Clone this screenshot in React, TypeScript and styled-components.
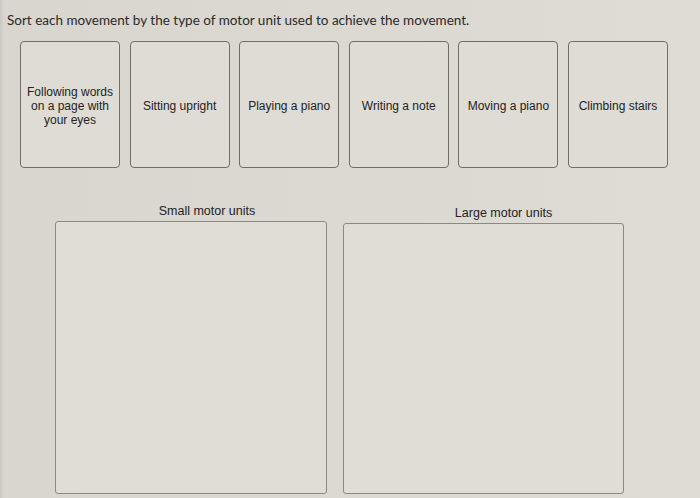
import React from 'react';
import styled, { createGlobalStyle } from 'styled-components';

const GlobalStyle = createGlobalStyle`
  html, body {
    margin: 0;
    padding: 0;
    background: #dad8d1;
  }
  body {
    font-family: 'Liberation Sans', Arial, sans-serif;
    color: #232323;
  }
`;

const Page = styled.div`
  width: 700px;
  height: 498px;
  overflow: hidden;
  box-sizing: border-box;
  padding: 11px 0 0 7px;
  background: linear-gradient(90deg, #c9c7c0 0, #d8d6cf 4px, #dbd9d2 60%, #dedcd5 100%);
`;

const Title = styled.div`
  font-family: Lato, 'Liberation Sans', sans-serif;
  font-size: 13.5px;
  line-height: 18px;
  color: #2a2a2a;
`;

const CardRow = styled.div`
  display: flex;
  gap: 9.6px;
  margin: 12px 0 0 13px;
`;

const Card = styled.div`
  width: 100px;
  height: 127px;
  box-sizing: border-box;
  border: 1px solid #6f6e6a;
  border-radius: 4px;
  background: #dedcd5;
  display: flex;
  align-items: center;
  justify-content: center;
  text-align: center;
  font-size: 12px;
  line-height: 14px;
  padding: 3px 3px 0;
`;

const Zones = styled.div`
  display: grid;
  grid-template-columns: 272px 281px;
  gap: 16px;
  margin: 36px 0 0 48px;
`;

const Zone = styled.div`
  display: flex;
  flex-direction: column;
  align-items: center;
`;

const ZoneLabel = styled.div<{ $shift: number; $drop: number }>`
  font-size: 12.5px;
  line-height: 14px;
  margin-left: ${(p) => p.$shift}px;
  margin-top: ${(p) => p.$drop}px;
  margin-bottom: 3px;
`;

const DropBox = styled.div<{ $h: number }>`
  width: 100%;
  height: ${(p) => p.$h}px;
  box-sizing: border-box;
  border: 1px solid #8a8984;
  border-radius: 3px;
  background: #dfddd6;
`;

const items = [
  'Following words on a page with your eyes',
  'Sitting upright',
  'Playing a piano',
  'Writing a note',
  'Moving a piano',
  'Climbing stairs',
];

const zones = [
  { label: 'Small motor units', shift: 32, drop: 0, h: 273 },
  { label: 'Large motor units', shift: 40, drop: 2, h: 271 },
];

export default function App() {
  return (
    <>
      <GlobalStyle />
      <Page>
        <Title>Sort each movement by the type of motor unit used to achieve the movement.</Title>
        <CardRow>
          {items.map((item) => (
            <Card key={item}>{item}</Card>
          ))}
        </CardRow>
        <Zones>
          {zones.map((z) => (
            <Zone key={z.label}>
              <ZoneLabel $shift={z.shift} $drop={z.drop}>{z.label}</ZoneLabel>
              <DropBox $h={z.h} />
            </Zone>
          ))}
        </Zones>
      </Page>
    </>
  );
}
